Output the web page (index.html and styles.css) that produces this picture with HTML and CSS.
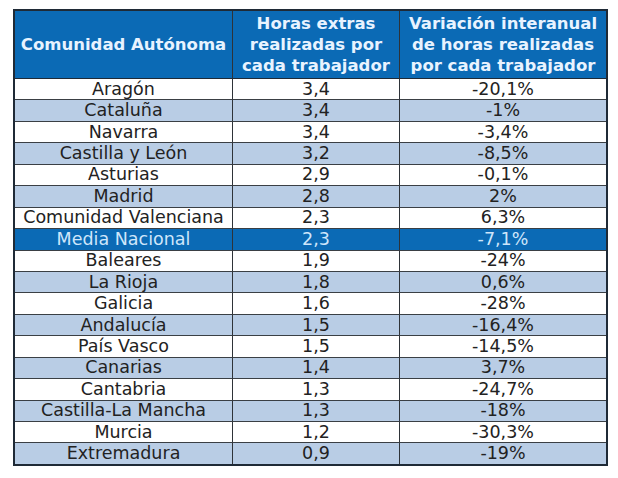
FILE: index.html
```html
<!DOCTYPE html>
<html lang="es">
<head>
<meta charset="utf-8">
<title>Horas extras por comunidad</title>
<link rel="stylesheet" href="styles.css">
</head>
<body>
<div class="page">
<table class="data">
  <colgroup>
    <col class="c1"><col class="c2"><col class="c3">
  </colgroup>
  <thead>
    <tr class="head">
      <th>Comunidad Autónoma</th>
      <th>Horas extras<br>realizadas por<br>cada trabajador</th>
      <th class="last">Variación interanual<br>de horas realizadas<br>por cada trabajador</th>
    </tr>
  </thead>
  <tbody>
    <tr><td>Aragón</td><td>3,4</td><td class="last">-20,1%</td></tr>
    <tr class="alt"><td>Cataluña</td><td>3,4</td><td class="last">-1%</td></tr>
    <tr><td>Navarra</td><td>3,4</td><td class="last">-3,4%</td></tr>
    <tr class="alt"><td>Castilla y León</td><td>3,2</td><td class="last">-8,5%</td></tr>
    <tr><td>Asturias</td><td>2,9</td><td class="last">-0,1%</td></tr>
    <tr class="alt"><td>Madrid</td><td>2,8</td><td class="last">2%</td></tr>
    <tr><td>Comunidad Valenciana</td><td>2,3</td><td class="last">6,3%</td></tr>
    <tr class="hl"><td>Media Nacional</td><td>2,3</td><td class="last">-7,1%</td></tr>
    <tr><td>Baleares</td><td>1,9</td><td class="last">-24%</td></tr>
    <tr class="alt"><td>La Rioja</td><td>1,8</td><td class="last">0,6%</td></tr>
    <tr><td>Galicia</td><td>1,6</td><td class="last">-28%</td></tr>
    <tr class="alt"><td>Andalucía</td><td>1,5</td><td class="last">-16,4%</td></tr>
    <tr><td>País Vasco</td><td>1,5</td><td class="last">-14,5%</td></tr>
    <tr class="alt"><td>Canarias</td><td>1,4</td><td class="last">3,7%</td></tr>
    <tr><td>Cantabria</td><td>1,3</td><td class="last">-24,7%</td></tr>
    <tr class="alt"><td>Castilla-La Mancha</td><td>1,3</td><td class="last">-18%</td></tr>
    <tr><td>Murcia</td><td>1,2</td><td class="last">-30,3%</td></tr>
    <tr class="alt end"><td>Extremadura</td><td>0,9</td><td class="last">-19%</td></tr>
  </tbody>
</table>
</div>
</body>
</html>
```

FILE: styles.css
```css
html, body {
  margin: 0;
  padding: 0;
  background: #ffffff;
}

.page {
  padding: 9px 0 0 13px;
}

.data {
  width: 595px;
  table-layout: fixed;
  border-collapse: separate;
  border-spacing: 0;
  border: 2px solid #1f2a36;
  font-family: "DejaVu Sans", Verdana, sans-serif;
  font-size: 17.5px;
  color: #222222;
}

.c1 { width: 218px; }
.c2 { width: 167px; }
.c3 { width: 206px; }

.data th,
.data td {
  padding: 0;
  text-align: center;
  vertical-align: middle;
  border-right: 1px solid #2e3338;
  border-bottom: 1px solid #3a3f44;
}

.data .last {
  border-right: none;
}

.head th {
  height: 67px;
  background: #0b6ab5;
  color: #e8f3ff;
  font-size: 16.5px;
  font-weight: bold;
  line-height: 21px;
  border-bottom-color: #1f2a36;
}

.data td {
  height: 20.44px;
  line-height: 19px;
  background: #ffffff;
}

.alt td {
  background: #b9cde5;
}

.hl td {
  background: #0b6ab5;
  color: #cfe6fb;
}

.end td {
  border-bottom: none;
}
```
